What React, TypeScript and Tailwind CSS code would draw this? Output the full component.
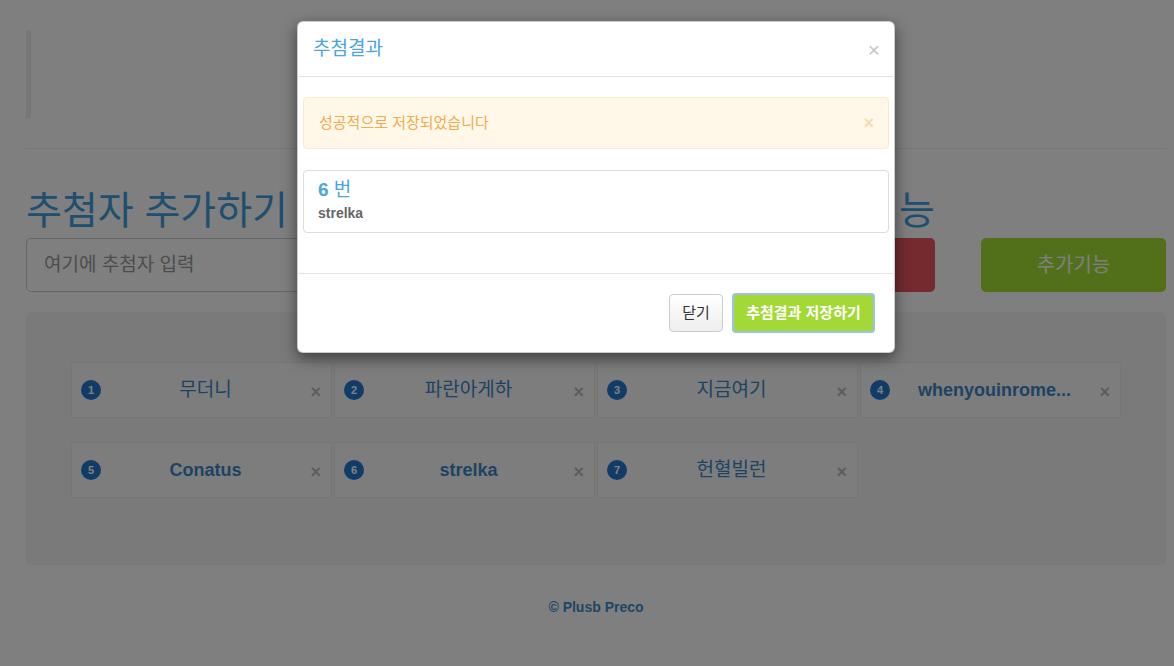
import React from "react";

const FONT = { fontFamily: '"Liberation Sans", "Noto Sans CJK KR", sans-serif' };

const items: { n: number; name: string; latin: boolean }[] = [
  { n: 1, name: "무더니", latin: false },
  { n: 2, name: "파란아게하", latin: false },
  { n: 3, name: "지금여기", latin: false },
  { n: 4, name: "whenyouinrome...", latin: true },
  { n: 5, name: "Conatus", latin: true },
  { n: 6, name: "strelka", latin: true },
  { n: 7, name: "헌혈빌런", latin: false },
];

export default function App() {
  return (
    <div className="relative h-[666px] w-full overflow-hidden bg-white text-[#333]" style={FONT}>
      {/* Page */}
      <div className="pl-[26px] pr-[8px]">
        <div className="pt-[30px]">
          <div className="h-[88px] border-l-[5px] border-[#eeeeee]" />
        </div>
        <div className="mt-[30px] h-px bg-[#eeeeee]" />
        <div className="mt-[38px] flex items-end">
          <h1 className="w-[540px] text-[39px] leading-[48px] text-[#3f9ee0]">추첨자 추가하기</h1>
          <h1 className="flex-1 text-right text-[39px] leading-[48px] text-[#3f9ee0]">추첨 기능</h1>
          <div className="w-[231px]" />
        </div>
        <div className="mt-[3px] flex h-[54px]">
          <div className="flex w-[520px] items-center rounded-[5px] border border-[#cccccc] px-[17px] text-[19px] text-[#999]">
            여기에 추첨자 입력
          </div>
          <div className="ml-[20px] flex-1 rounded-[5px] bg-[#e8545e]" />
          <div className="ml-[46px] flex w-[185px] items-center justify-center rounded-[5px] bg-[#a4e034] text-[20px] text-white">
            추가기능
          </div>
        </div>
        <div className="mt-[20px] h-[253px] rounded-[5px] bg-[#f4f4f4] px-[45px] pt-[50px]">
          <div className="grid grid-cols-4 gap-x-[2px] gap-y-[24px]">
            {items.map((it) => (
              <div
                key={it.n}
                className="relative flex h-[56px] items-center justify-center border border-[#ededed] bg-[#fbfbfb] pl-[8px]"
              >
                <span className="absolute left-[9px] top-[17px] flex h-[20px] w-[20px] items-center justify-center rounded-full bg-[#2478d0] text-[11px] font-bold text-white">
                  {it.n}
                </span>
                <span
                  className={
                    it.latin
                      ? "text-[18px] font-bold text-[#3a86c8]"
                      : "text-[19px] text-[#3a86c8]"
                  }
                >
                  {it.name}
                </span>
                <span className="absolute right-[10px] top-[20px] text-[18px] font-bold leading-none text-[#bbbbbb]">
                  ×
                </span>
              </div>
            ))}
          </div>
        </div>
        <div className="mt-[32px] text-center text-[14px] font-bold text-[#3f8ccc]">© Plusb Preco</div>
      </div>

      {/* Backdrop */}
      <div className="absolute inset-0 bg-black/50" />

      {/* Modal */}
      <div className="absolute left-[297px] top-[21px] w-[598px] rounded-[6px] border border-black/20 bg-white shadow-[0_5px_15px_rgba(0,0,0,0.5)]">
        <div className="flex h-[55px] items-center justify-between border-b border-[#e5e5e5] px-[15px]">
          <span className="text-[19px] text-[#4aa5e0]">추첨결과</span>
          <span className="mr-[-1px] text-[21px] leading-none text-[#c4c4c4]">×</span>
        </div>
        <div className="px-[5px] pt-[20px] pb-[40px]">
          <div className="flex h-[52px] items-center justify-between rounded-[4px] border border-[#faebcc] bg-[#fff7e8] px-[15px] text-[15px] text-[#f0ad4e]">
            <span>성공적으로 저장되었습니다</span>
            <span className="mr-[-1px] text-[18px] font-bold leading-none text-[#f5dcb0]">×</span>
          </div>
          <div className="mt-[21px] h-[63px] rounded-[4px] border border-[#dddddd] px-[14px] pt-[5px]">
            <div className="text-[19px] leading-[27px] text-[#4aa5e0]">
              <span className="font-bold">6</span> 번
            </div>
            <div className="text-[14px] font-bold leading-[20px] text-[#666]">strelka</div>
          </div>
        </div>
        <div className="flex h-[79px] items-center justify-end gap-[9px] border-t border-[#e5e5e5] px-[19px]">
          <div className="flex h-[38px] w-[54px] items-center justify-center rounded-[4px] border border-[#cccccc] bg-gradient-to-b from-white to-[#eeeeee] text-[15px] text-[#333]">
            닫기
          </div>
          <div className="flex h-[40px] w-[143px] items-center justify-center rounded-[4px] border-2 border-[#9cc0f0] bg-[#a2d935] text-[15px] font-bold text-white">
            추첨결과 저장하기
          </div>
        </div>
      </div>
    </div>
  );
}
